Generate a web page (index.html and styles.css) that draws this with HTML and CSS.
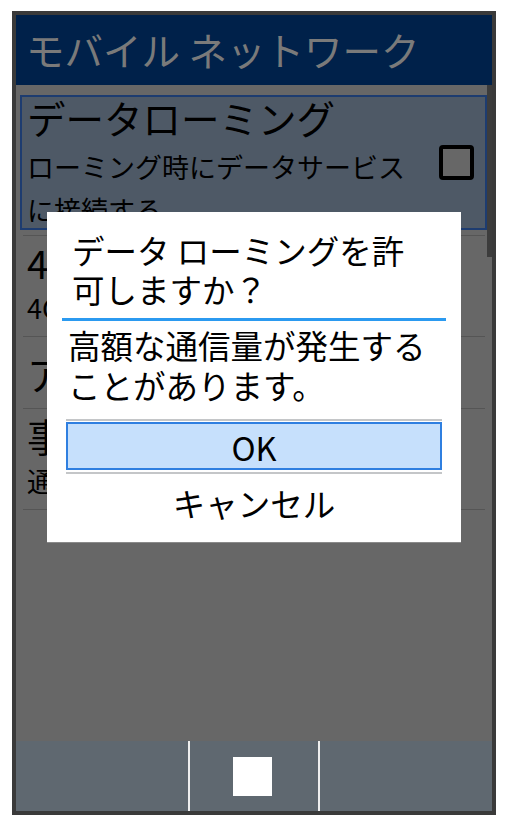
FILE: index.html
```html
<!DOCTYPE html>
<html lang="ja">
<head>
    <meta charset="UTF-8">
    <meta name="viewport" content="width=device-width, initial-scale=1.0">
    <title>モバイル ネットワーク</title>
    <link rel="stylesheet" href="styles.css">
</head>
<body>
    <div class="phone">
        <div class="header">モバイル ネットワーク</div>

        <div class="main">
            <div class="list">
                <!-- Selected item -->
                <div class="item selected">
                    <div class="item-text">
                        <div class="item-title">データローミング</div>
                        <div class="item-sub">ローミング時にデータサービス<br>に接続する</div>
                    </div>
                    <div class="checkbox"></div>
                </div>
                <div class="item plain tall">
                    <div class="item-title">4G LTE拡張モード</div>
                    <div class="item-sub">4G LTEを使用する</div>
                </div>
                <div class="item plain short">
                    <div class="item-title">アクセスポイント名</div>
                </div>
                <div class="item plain tall last">
                    <div class="item-title">事業者</div>
                    <div class="item-sub">通信事業者を選択</div>
                </div>
            </div>
            <div class="scrollbar"><div class="thumb"></div></div>
        </div>

        <div class="navbar">
            <div class="nav-cell"></div>
            <div class="nav-sep"></div>
            <div class="nav-cell center"><div class="nav-square"></div></div>
            <div class="nav-sep"></div>
            <div class="nav-cell"></div>
        </div>

        <!-- Dialog over the list -->
        <div class="dialog">
            <div class="dialog-title">データ ローミングを許<br>可しますか？</div>
            <div class="dialog-msg">高額な通信量が発生する<br>ことがあります。</div>
            <div class="dialog-actions">
                <div class="rule"></div>
                <div class="btn ok">OK</div>
                <div class="rule"></div>
                <div class="btn">キャンセル</div>
            </div>
        </div>
    </div>
</body>
</html>
```

FILE: styles.css
```css
/* Phone frame */
body {
    margin: 0;
    background: #ffffff;
}

.phone {
    width: 476px;
    height: 796px;
    margin: 11px 0 0 12px;
    border: 4px solid #3a3a3a;
    background: #676767;
    display: flex;
    flex-direction: column;
    position: relative; /* dialog sits on top */
    font-family: "Noto Sans CJK JP", "Noto Sans", sans-serif;
    color: #000;
}

.header {
    height: 70px;
    flex-shrink: 0;
    background: #00214a;
    color: #7a7a7a;
    font-size: 38.5px;
    display: flex;
    align-items: center;
    padding-left: 10px;
    padding-bottom: 3px;
    box-sizing: border-box;
}

/* List */
.main {
    flex: 1;
    display: flex;
}

.list {
    flex: 1;
    padding: 10px 0 0 4px;
}

.scrollbar {
    width: 5px;
}

.thumb {
    height: 172px;
    background: #3c3c3c;
}

.item.selected {
    height: 135px;
    box-sizing: border-box;
    background: #4e5966;
    border: 2px solid #1d3c70;
    padding-left: 5px;
    display: flex;
    align-items: center;
    overflow: hidden;
    margin-bottom: 5px;
}

.item-text {
    flex: 1;
    align-self: flex-start;
}

.item-title {
    font-size: 38.5px;
    line-height: 40px;
}

.item-sub {
    font-size: 27px;
    line-height: 43px;
    margin-top: 8px;
}

.checkbox {
    width: 27px;
    height: 27px;
    border: 4px solid #000;
    border-radius: 4px;
    background: #676767;
    margin-right: 11px;
}

.item.plain {
    margin: 0 2px 0 3px;
    border-top: 1px solid #555555;
    padding-left: 4px;
    overflow: hidden;
}

.item.plain.tall {
    height: 100px;
}

.item.plain.short {
    height: 71px;
    display: flex;
    align-items: center;
}

.item.plain.last {
    border-bottom: 1px solid #555555;
}

.item.plain .item-title {
    padding-top: 6px;
}

.item.plain.short .item-title {
    padding-top: 0;
}

.item.plain .item-sub {
    margin-top: 4px;
}

/* Bottom navigation */
.navbar {
    height: 70px;
    flex-shrink: 0;
    background: #5f6870;
    display: flex;
}

.nav-cell {
    width: 172px;
}

.nav-cell.center {
    width: 128px;
    display: flex;
    align-items: center;
    justify-content: center;
}

.nav-sep {
    width: 2px;
    background: #eeeeee;
}

.nav-square {
    width: 39px;
    height: 39px;
    margin-right: 3px;
    background: #ffffff;
}

/* Dialog */
.dialog {
    position: absolute;
    left: 31px;
    top: 197px;
    width: 414px;
    height: 330px;
    background: #ffffff;
    box-shadow: 0 1px 0 #8a8a8a;
}

.dialog-title {
    font-size: 32.5px;
    line-height: 39px;
    margin: 0 15px;
    padding: 18px 0 10px 10px;
    border-bottom: 3px solid #2b9af0;
}

.dialog-msg {
    font-size: 32.5px;
    line-height: 40px;
    padding: 4px 0 0 21px;
}

.dialog-actions {
    margin: 14px 19px 0;
}

.rule {
    height: 2px;
    background: #c4c6c8;
}

.btn {
    height: 56px;
    font-size: 32.5px;
    display: flex;
    align-items: center;
    justify-content: center;
}

.btn.ok {
    height: 44px;
    margin: 1px 0 2px;
    background: #c6e0fc;
    border: 2px solid #2f7fe0;
}
```
